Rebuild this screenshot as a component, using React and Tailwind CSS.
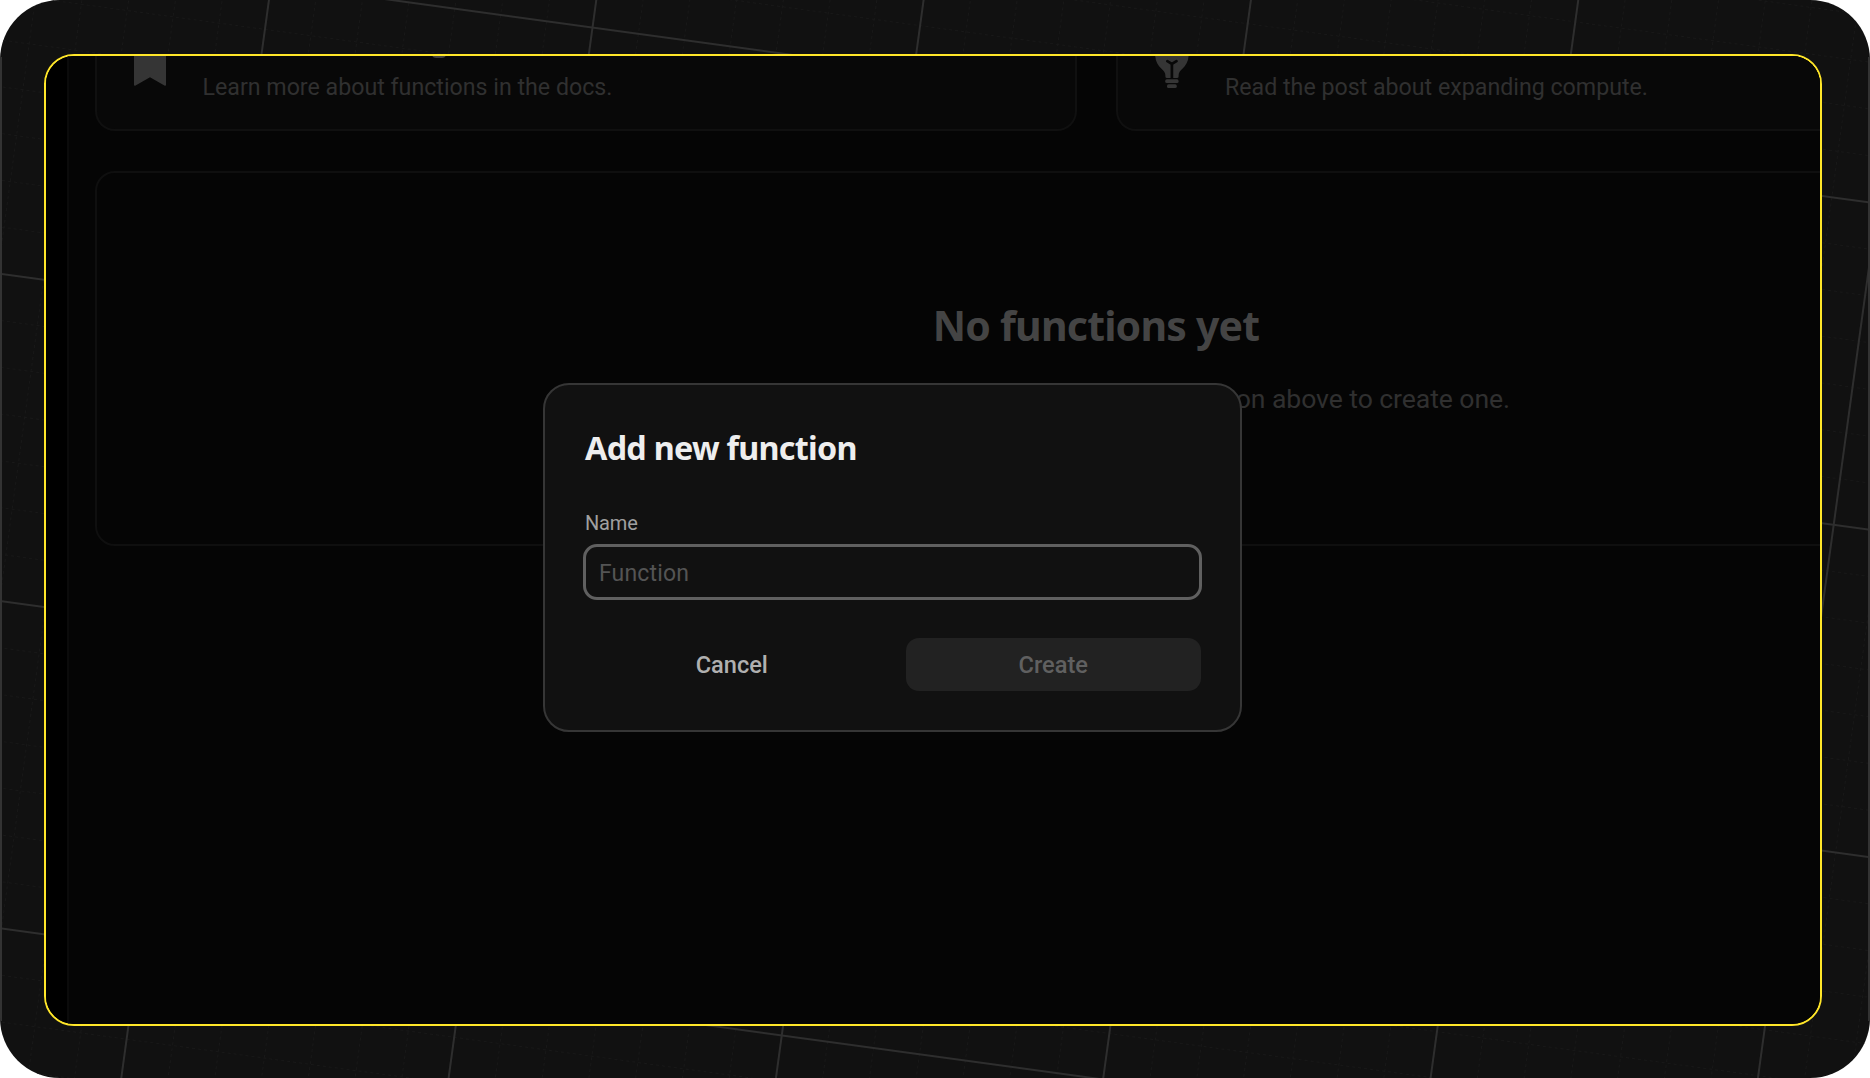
import React from "react";

const RANGE = Array.from({ length: 13 }, (_, i) => i - 6);
const STEP = 324.3;
const MINOR = [1, 2, 3, 4, 5, 6];

function GridBackdrop() {
  return (
    <svg className="absolute inset-0 h-full w-full" viewBox="0 0 1870 1078" fill="none" aria-hidden="true">
      <g transform="translate(227.2 304.8) rotate(7.8)">
        {RANGE.map((n) =>
          MINOR.map((m) => {
            const p = (n + m / 7) * STEP;
            return (
              <g key={`${n}-${m}`} stroke="#191919" strokeWidth="1" strokeDasharray="3 3">
                <line x1={p} x2={p} y1="-1800" y2="1800" />
                <line y1={p} y2={p} x1="-1800" x2="2400" />
              </g>
            );
          })
        )}
        {RANGE.map((n) => (
          <g key={n} stroke="#2e2e2e" strokeWidth="2">
            <line x1={n * STEP} x2={n * STEP} y1="-1800" y2="1800" />
            <line y1={n * STEP} y2={n * STEP} x1="-1800" x2="2400" />
          </g>
        ))}
      </g>
      <path d="M1 57V1021M1869 57V1021" stroke="#333" strokeWidth="2" />
    </svg>
  );
}

function BookmarkIcon() {
  return (
    <svg className="h-[30px] w-8 shrink-0" viewBox="0 0 32 30" fill="#353535">
      <path d="M0 0H32V28.6Q32 30.4 30.4 29.6L16 21.3L1.6 29.6Q0 30.4 0 28.6Z" />
    </svg>
  );
}

function BulbIcon() {
  return (
    <svg className="h-8 w-[34px] shrink-0" viewBox="0 0 34 32">
      <path d="M0.2 0H33.6C33.2 5.6 30.8 9.6 27.4 12.7C25.2 14.8 23.6 16.6 23.6 19.6V20.4Q23.6 22 22 22H12Q10.4 22 10.4 20.4V19.6C10.4 16.6 8.6 14.8 6.5 12.7C3 9.6 0.6 5.6 0.2 0Z" fill="#353535" />
      <path d="M12.3 5.2L16.9 8L21.5 5.2M16.9 8V22" stroke="#080808" strokeWidth="2.7" strokeLinecap="round" fill="none" />
      <rect x="10.2" y="23.3" width="13.4" height="3.7" rx="1.6" fill="#353535" />
      <rect x="12" y="28.3" width="9.8" height="3.7" rx="1.6" fill="#353535" />
    </svg>
  );
}

function InfoCard({ icon, children, descender }) {
  return (
    <div className="relative flex h-[75px] w-[981.5px] rounded-b-[20px] border-2 border-t-0 border-[#101010] bg-[#080808] pl-[37px]">
      {icon}
      <p className="ml-[36.5px] mt-[15px] text-[23.2px] leading-8 text-[#303030]">{children}</p>
      {descender && <span className="absolute -top-[6px] left-[335px] h-2 w-[14px] rounded-full bg-[#404040]" />}
    </div>
  );
}

function Page() {
  return (
    <div className="flex h-full">
      <div className="w-[23px] shrink-0 border-r-2 border-[#0b0b0b] bg-black" />
      <div className="min-w-0 flex-1 overflow-hidden bg-[#050505] pl-[26px]">
        <div className="w-[2002px]">
          <div className="flex gap-[39px]">
            <InfoCard icon={<BookmarkIcon />} descender>Learn more about functions in the docs.</InfoCard>
            <InfoCard icon={<BulbIcon />}>Read the post about expanding compute.</InfoCard>
          </div>
          <div className="mt-10 h-[375px] rounded-[20px] border-2 border-[#0f0f0f] pt-32">
            <h2 className="text-center font-['Noto_Sans',sans-serif] text-[41px] font-bold leading-[48px] tracking-[-0.8px] text-[#444]">No functions yet</h2>
            <p className="mt-8 pr-[585px] text-right text-[26.6px] leading-9 tracking-[-0.08px] text-[#303030]">button above to create one.</p>
          </div>
        </div>
      </div>
    </div>
  );
}

function Dialog() {
  return (
    <div className="absolute left-[497px] top-[327px] h-[349px] w-[699px] rounded-[26px] border-2 border-[#363636] bg-[#111] pl-[39px] pr-[39px] pt-[42px]">
      <h3 className="pl-px font-['Noto_Sans',sans-serif] text-[32.3px] font-bold leading-10 tracking-[-0.72px] text-[#eee]">Add new function</h3>
      <label className="mt-11 block pl-px text-xl leading-6 tracking-[-0.15px] text-[#a0a0a0]">Name</label>
      <div className="-mx-px mt-[9px] flex h-14 items-center rounded-[14px] border-[3px] border-[#606060] pl-[13px] pt-1">
        <span className="text-[23px] leading-7 tracking-[0.15px] text-[#545454]">Function</span>
      </div>
      <div className="mt-[38px] grid grid-cols-2 gap-[26px]">
        <button className="h-[53px] rounded-[13px] pt-[3px] text-[23.6px] font-medium text-[#b0b0b0]">Cancel</button>
        <button className="h-[53px] rounded-[13px] bg-[#222] pt-[3px] text-[23.6px] font-medium text-[#606060]">Create</button>
      </div>
    </div>
  );
}

export default function App() {
  return (
    <div className="h-[1078px] w-[1870px] bg-white font-['Roboto',sans-serif]">
      <div className="relative h-full w-full overflow-hidden rounded-[60px] bg-[#111] pb-[52px] pl-11 pr-12 pt-[54px]">
        <GridBackdrop />
        <div className="relative h-full overflow-hidden rounded-[30px] border-2 border-[#ffe629] bg-black">
          <Page />
          <Dialog />
        </div>
      </div>
    </div>
  );
}
